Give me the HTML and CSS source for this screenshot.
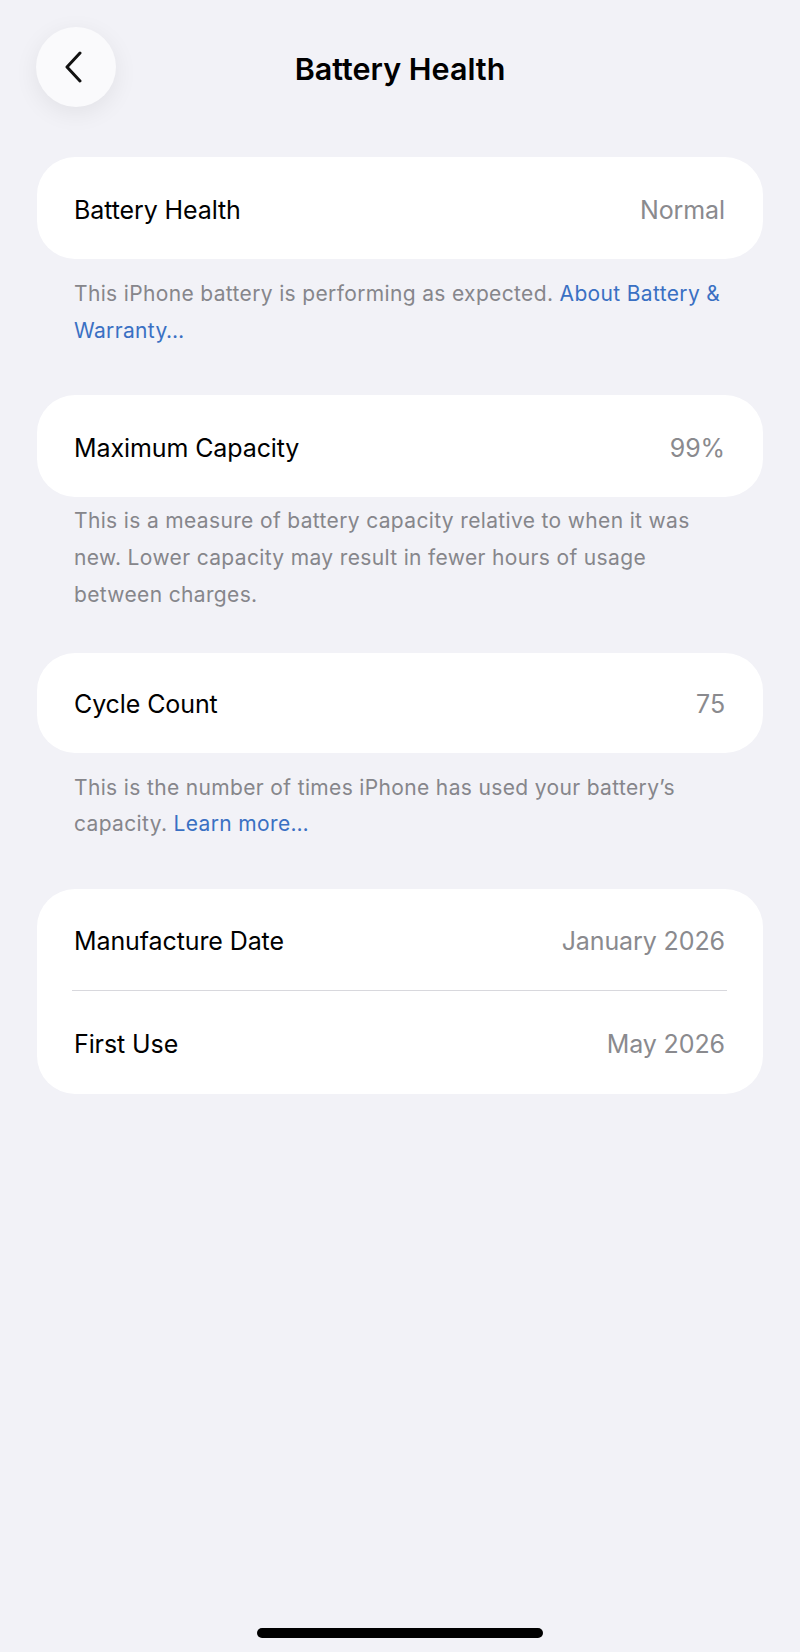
FILE: index.html
```html
<!DOCTYPE html>
<html lang="en">
<head>
<meta charset="utf-8">
<title>Battery Health</title>
<link rel="stylesheet" href="styles.css">
</head>
<body>
<div class="screen">
  <header class="nav">
    <button class="back" aria-label="Back">
      <svg width="20" height="32" viewBox="0 0 20 32" fill="none"><path d="M16 2 L3 16 L16 30" stroke="#111" stroke-width="3" stroke-linecap="round" stroke-linejoin="round"/></svg>
    </button>
    <h1 class="title">Battery Health</h1>
    <span class="nav-spacer"></span>
  </header>

  <section class="group g1">
    <div class="card">
      <div class="row"><span class="label">Battery Health</span><span class="value">Normal</span></div>
    </div>
    <p class="footer f1">This iPhone battery is performing as expected. <a class="link">About Battery &amp;<br>Warranty…</a></p>
  </section>

  <section class="group g2">
    <div class="card">
      <div class="row"><span class="label">Maximum Capacity</span><span class="value">99%</span></div>
    </div>
    <p class="footer f2">This is a measure of battery capacity relative to when it was<br>new. Lower capacity may result in fewer hours of usage<br>between charges.</p>
  </section>

  <section class="group g3">
    <div class="card">
      <div class="row row-short"><span class="label">Cycle Count</span><span class="value">75</span></div>
    </div>
    <p class="footer f3">This is the number of times iPhone has used your battery’s<br>capacity. <a class="link">Learn more…</a></p>
  </section>

  <section class="group g4">
    <div class="card">
      <div class="row row-top"><span class="label">Manufacture Date</span><span class="value">January 2026</span></div>
      <div class="divider"></div>
      <div class="row row-bottom"><span class="label">First Use</span><span class="value">May 2026</span></div>
    </div>
  </section>

  <div class="home-indicator"></div>
</div>
</body>
</html>
```

FILE: styles.css
```css
* { box-sizing: border-box; }

html, body {
  margin: 0;
  padding: 0;
  background: #f2f2f7;
}

body {
  font-family: "Inter", "Roboto", "Noto Sans", sans-serif;
  color: #000;
}

.screen {
  width: 800px;
  height: 1652px;
  display: flex;
  flex-direction: column;
  background: #f2f2f7;
}

.nav {
  display: grid;
  grid-template-columns: 1fr auto 1fr;
  align-items: center;
  padding: 27px 36px 0;
  height: 107px;
}

.back {
  width: 80px;
  height: 80px;
  border-radius: 50%;
  border: none;
  background: #fafafc;
  box-shadow: 0 6px 24px rgba(0, 0, 0, 0.07);
  display: flex;
  align-items: center;
  justify-content: center;
  padding: 0 4px 0 0;
}

.title {
  margin: 0;
  font-size: 30.5px;
  font-weight: 600;
  letter-spacing: 0;
  line-height: 36px;
  padding-top: 3px;
}

.group {
  padding: 0 37px;
}

.g1 { margin-top: 50px; }
.g2 { margin-top: 46px; }
.g3 { margin-top: 39px; }
.g4 { margin-top: 46px; }

.card {
  background: #fff;
  border-radius: 38px;
}

.row {
  height: 102px;
  display: flex;
  align-items: center;
  justify-content: space-between;
  padding: 3px 38px 0 37px;
  font-size: 25px;
  letter-spacing: -0.1px;
}

.row-short { height: 100px; }
.row-top { height: 101px; }
.row-bottom { height: 103px; }

.label { color: #000; }
.value { color: #8a8a8e; }

.divider {
  height: 1.5px;
  margin: 0 36px 0 35px;
  background: #d8d8dd;
}

.footer {
  margin: 0;
  padding: 0 10px 0 37px;
  font-size: 21px;
  line-height: 36.7px;
  color: #86868b;
  letter-spacing: 0.35px;
  white-space: nowrap;
}

.f1 { margin-top: 17px; }
.f2 { margin-top: 6px; }
.f3 { margin-top: 17px; }

.link { color: #3a70c3; }

.home-indicator {
  margin: auto auto 14px;
  width: 286px;
  height: 10px;
  border-radius: 5px;
  background: #000;
}
```
